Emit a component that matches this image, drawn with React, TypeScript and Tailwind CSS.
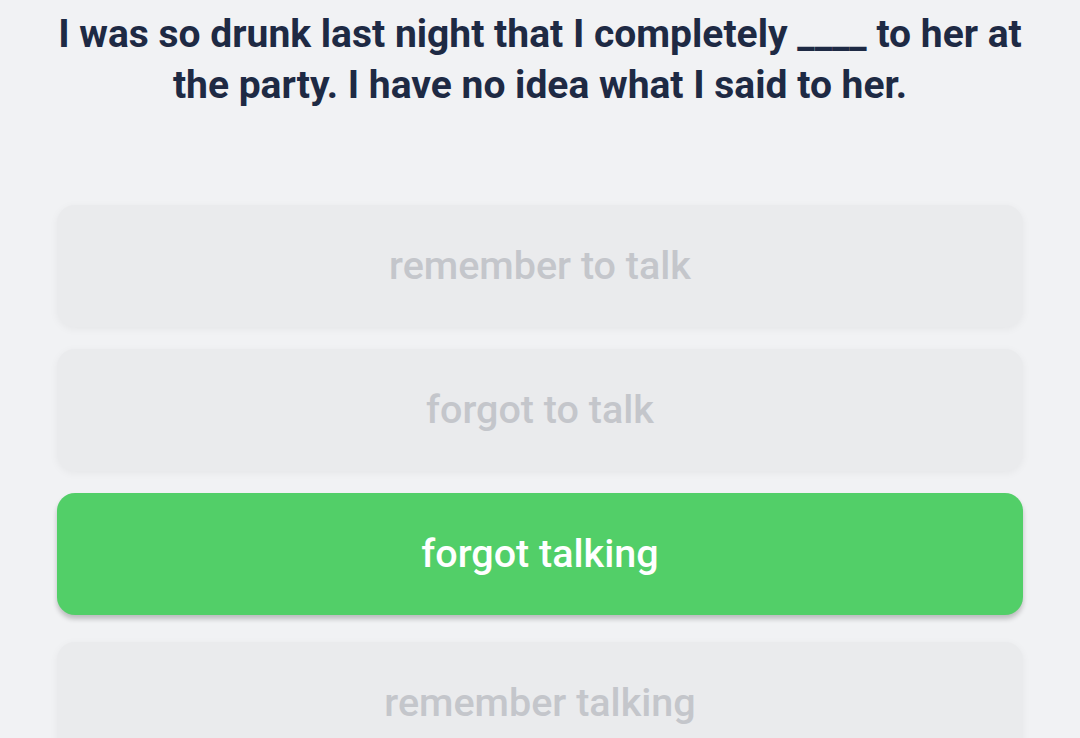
import React from "react";

const options = [
  { label: "remember to talk", selected: false },
  { label: "forgot to talk", selected: false },
  { label: "forgot talking", selected: true },
  { label: "remember talking", selected: false },
];

export default function App() {
  return (
    <div
      className="w-[1080px] h-[738px] overflow-hidden bg-[#f1f2f4]"
      style={{ fontFamily: "Roboto, 'Noto Sans', sans-serif" }}
    >
      <h1 className="pt-[9px] px-[50px] text-center text-[39px] leading-[51px] font-bold text-[#1e2a44]">
        I was so drunk last night that I completely ____ to her at the party. I have no idea what I said to her.
      </h1>
      <div className="mt-[94px] px-[57px] flex flex-col gap-[22px]">
        {options.map((o, i) => (
          <div
            key={o.label}
            className={
              o.selected
                ? "h-[122px] rounded-[18px] bg-[#52cf68] flex items-center justify-center text-white text-[39.5px] font-medium shadow-[0_4px_5px_rgba(0,0,0,0.22)]"
                : i === 3
                ? "mt-[5px] h-[122px] rounded-[18px] bg-[#eaebed] flex items-center justify-center text-[#c4c6cb] text-[39.5px] font-medium shadow-[0_2px_8px_rgba(0,0,0,0.05)]"
                : "h-[122px] rounded-[18px] bg-[#eaebed] flex items-center justify-center text-[#c4c6cb] text-[39.5px] font-medium shadow-[0_2px_8px_rgba(0,0,0,0.05)]"
            }
          >
            {o.label}
          </div>
        ))}
      </div>
    </div>
  );
}
